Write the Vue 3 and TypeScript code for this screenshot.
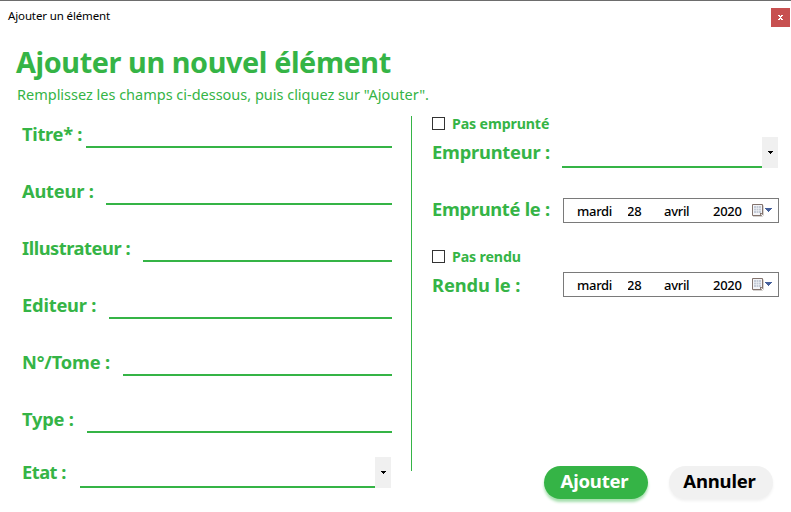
<script setup lang="ts">
import { ref } from 'vue'

interface Field {
  id: string
  label: string
  labelWidth: number
  tracking: number
  select?: boolean
}

const fields: Field[] = [
  { id: 'titre', label: 'Titre* :', labelWidth: 64, tracking: -0.3 },
  { id: 'auteur', label: 'Auteur :', labelWidth: 84, tracking: -0.22 },
  { id: 'illustrateur', label: 'Illustrateur :', labelWidth: 121, tracking: -0.46 },
  { id: 'editeur', label: 'Editeur :', labelWidth: 87, tracking: -0.2 },
  { id: 'tome', label: 'N°/Tome :', labelWidth: 101, tracking: -0.16 },
  { id: 'type', label: 'Type :', labelWidth: 65, tracking: -0.2 },
  { id: 'etat', label: 'Etat :', labelWidth: 58, tracking: -0.5, select: true },
]

const notBorrowed = ref(false)
const notReturned = ref(false)
</script>

<template>
  <main class="window">
    <header class="titlebar">
      <span class="caption">Ajouter un élément</span>
      <button class="close" type="button" aria-label="Fermer">
        <svg width="5" height="5" viewBox="0 0 5 5" shape-rendering="crispEdges">
          <path fill="#fff" d="M0 0h2v1H0zM3 0h2v1H3zM1 1h3v1H1zM2 2h1v1H2zM1 3h3v1H1zM0 4h2v1H0zM3 4h2v1H3z" />
        </svg>
      </button>
    </header>

    <h1>Ajouter un nouvel élément</h1>
    <p class="subtitle">Remplissez les champs ci-dessous, puis cliquez sur "Ajouter".</p>

    <div class="columns">
      <section class="left">
        <div v-for="f in fields" :key="f.id" class="field" :class="{ 'field-select': f.select }">
          <label :for="f.id" :style="{ width: f.labelWidth + 'px', letterSpacing: f.tracking + 'px' }">{{ f.label }}</label>
          <input :id="f.id" type="text" />
          <button v-if="f.select" class="arrow" type="button" aria-label="Ouvrir">
            <svg width="5" height="3" viewBox="0 0 5 3" shape-rendering="crispEdges"><path d="M0 0h5v1H0zM1 1h3v1H1zM2 2h1v1H2z" /></svg>
          </button>
        </div>
      </section>

      <section class="right">
        <label class="check"><input v-model="notBorrowed" type="checkbox" /><span>Pas emprunté</span></label>
        <div class="field borrower">
          <label for="emprunteur" class="borrower-label">Emprunteur :</label>
          <input id="emprunteur" type="text" />
          <button class="arrow" type="button" aria-label="Ouvrir">
            <svg width="5" height="3" viewBox="0 0 5 3" shape-rendering="crispEdges"><path d="M0 0h5v1H0zM1 1h3v1H1zM2 2h1v1H2z" /></svg>
          </button>
        </div>
        <div class="date-row">
          <span class="date-label borrowed-label">Emprunté le :</span>
          <div class="date">
            <span>mardi</span><span class="day">28</span><span>avril</span><span>2020</span>
            <svg class="calendar" width="22" height="14" viewBox="0 0 22 14">
              <path d="M1 12.5h9.5l1-1v-10" fill="none" stroke="#d5d2d0" />
              <path d="M.5 .5h10v10l-1 1h-9z" fill="#f3f4f8" stroke="#83736d" />
              <path d="M2 2h7v7H2z" fill="#c3cad6" />
              <path d="M2 4.5h7M2 6.5h7M4.5 2v7M6.5 2v7" stroke="#eef0f5" stroke-width=".6" />
              <path d="M8 11.5v-2.5h2.5z" fill="#83736d" />
              <path d="M13 4h7v1h-1v1h-1v1h-1v1h-1V7h-1V6h-1V5h-1z" fill="#45609b" />
            </svg>
          </div>
        </div>
        <label class="check returned-check"><input v-model="notReturned" type="checkbox" /><span>Pas rendu</span></label>
        <div class="date-row">
          <span class="date-label returned-label">Rendu le :</span>
          <div class="date">
            <span>mardi</span><span class="day">28</span><span>avril</span><span>2020</span>
            <svg class="calendar" width="22" height="14" viewBox="0 0 22 14">
              <path d="M1 12.5h9.5l1-1v-10" fill="none" stroke="#d5d2d0" />
              <path d="M.5 .5h10v10l-1 1h-9z" fill="#f3f4f8" stroke="#83736d" />
              <path d="M2 2h7v7H2z" fill="#c3cad6" />
              <path d="M2 4.5h7M2 6.5h7M4.5 2v7M6.5 2v7" stroke="#eef0f5" stroke-width=".6" />
              <path d="M8 11.5v-2.5h2.5z" fill="#83736d" />
              <path d="M13 4h7v1h-1v1h-1v1h-1v1h-1V7h-1V6h-1V5h-1z" fill="#45609b" />
            </svg>
          </div>
        </div>
        <footer>
          <button class="action primary" type="button">Ajouter</button>
          <button class="action" type="button">Annuler</button>
        </footer>
      </section>
    </div>
  </main>
</template>

<style>
body {
  background: #fff;
}
</style>

<style scoped>
* {
  box-sizing: border-box;
}

.window {
  width: 791px;
  height: 512px;
  overflow: hidden;
  border-top: 1px solid #6d6d6d;
  background: #fff;
  color: #35b446;
  font-family: "Noto Sans", "Open Sans", sans-serif;
}

button,
input {
  margin: 0;
  padding: 0;
  border: 0;
  border-radius: 0;
  background: none;
  font: inherit;
}

.titlebar {
  display: flex;
  justify-content: space-between;
  height: 44px;
  padding: 7px 1px 0 8px;
}

.caption {
  color: #000;
  font-size: 11.5px;
  letter-spacing: -0.13px;
  line-height: 16px;
}

.close {
  display: flex;
  align-items: center;
  justify-content: center;
  width: 19px;
  height: 19px;
  background: #c75050;
}

h1 {
  height: 40px;
  margin: 0;
  padding-left: 16px;
  font-size: 28.8px;
  font-weight: 700;
  letter-spacing: -0.4px;
  line-height: 34px;
  white-space: nowrap;
}

.subtitle {
  height: 30px;
  margin: 0;
  padding-left: 17px;
  font-size: 14.5px;
  letter-spacing: -0.01px;
  line-height: 19px;
  white-space: nowrap;
}

.columns {
  display: grid;
  grid-template-columns: 412px 379px;
  height: 396px;
}

.left {
  height: 355px;
  margin-top: 1px;
  padding: 1px 19px 0 22px;
  border-right: 1px solid #35b446;
}

.field {
  display: flex;
  height: 31px;
  margin-bottom: 26px;
}

.left .field-select {
  margin-top: -2px;
  padding-right: 1px;
}

.field label,
.date-label {
  flex: none;
  font-size: 18.3px;
  font-weight: 700;
  line-height: 33px;
  white-space: nowrap;
}

.left .field-select label {
  line-height: 29px;
}

.field input {
  flex: 1;
  min-width: 0;
  border-bottom: 2px solid #35b446;
  outline: 0;
}

.arrow {
  display: flex;
  flex: none;
  align-items: center;
  justify-content: center;
  width: 16px;
  background: #f0f0f0;
}

.right {
  padding: 0 12px 0 20px;
}

.check {
  display: flex;
  align-items: center;
  gap: 7px;
  height: 17px;
  font-size: 14.2px;
  font-weight: 700;
  letter-spacing: -0.13px;
  line-height: 17px;
}

.check input {
  width: 13px;
  height: 13px;
  border: 1px solid #333;
  background: #fff;
  appearance: none;
}

.borrower {
  width: 346px;
  margin: 5px 0 30px;
}

.field .borrower-label {
  width: 130px;
  letter-spacing: -0.2px;
  line-height: 29px;
}

.date-row {
  display: flex;
  height: 25px;
}

.date-label {
  width: 131px;
}

.borrowed-label {
  letter-spacing: -0.28px;
  line-height: 21px;
}

.returned-label {
  letter-spacing: -0.1px;
  line-height: 25px;
}

.date {
  display: grid;
  grid-template-columns: 51px 36px 49px 39px 22px;
  align-items: center;
  width: 216px;
  padding-left: 13px;
  border: 1px solid #7a7a7a;
  color: #000;
  font-size: 13px;
  font-weight: 500;
  letter-spacing: -0.3px;
  line-height: 23px;
}

.date span {
  padding-top: 1px;
  line-height: 22px;
}

.date .day {
  overflow: hidden;
  text-indent: -1px;
}

.returned-check {
  margin: 25px 0 7px;
}

footer {
  display: flex;
  gap: 21px;
  margin: 169px 0 0 112px;
}

.action {
  width: 104px;
  height: 33px;
  padding: 0 3px 3px 0;
  border-radius: 17px;
  background: #f1f1f1;
  box-shadow: 0 2px 3px #f1f1f1;
  color: #000;
  font-size: 18.5px;
  font-weight: 700;
  letter-spacing: -0.2px;
  line-height: 30px;
}

.primary {
  background: #35b446;
  box-shadow: 0 3px 3px #a5dfad;
  color: #fff;
}
</style>
